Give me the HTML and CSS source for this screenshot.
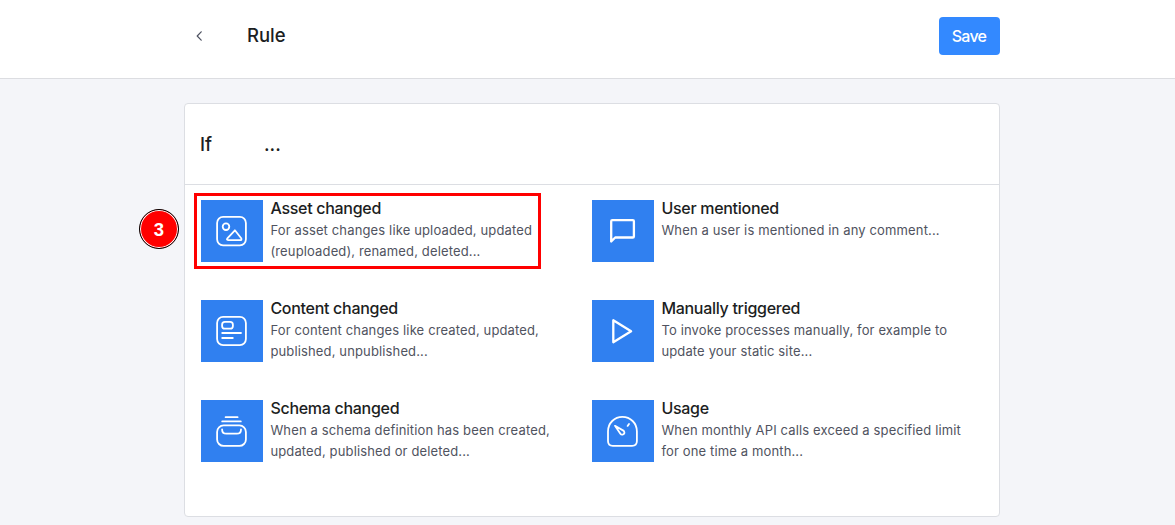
FILE: index.html
```html
<!DOCTYPE html>
<html lang="en">
<head>
<meta charset="utf-8">
<title>Rule</title>
<link rel="stylesheet" href="styles.css">
</head>
<body>
<header class="topbar">
  <div class="topbar-inner">
    <svg class="back" width="8" height="12" viewBox="0 0 8 12"><path d="M6.2 1.8 L2.2 6 L6.2 10.2"/></svg>
    <h1 class="title"><span>Rule</span></h1>
    <button class="save"><span>Save</span></button>
  </div>
</header>
<main class="card">
  <div class="card-head"><span class="if">If</span><span class="dots">...</span></div>
  <div class="triggers">
    <section class="trigger">
      <svg class="tile" viewBox="0 0 62 62"><rect x="16.1" y="16.9" width="28.8" height="28.4" rx="6"/><circle cx="25" cy="26.7" r="3.3"/><path d="M33.9 30.3 L40.2 38.2 Q41.2 40.2 39 40.2 H27.2 Q25 40 26.6 38.2 Z"/></svg>
      <div class="copy"><h2><span>Asset changed</span></h2><p><span>For asset changes like uploaded, updated</span><br><span>(reuploaded), renamed, deleted...</span></p></div>
    </section>
    <section class="trigger">
      <svg class="tile" viewBox="0 0 62 62"><path class="bold" d="M19.2 41.5 V21.3 Q19.2 20.2 20.3 20.2 H40.8 Q41.9 20.2 41.9 21.3 V36.4 Q41.9 37.5 40.8 37.5 H23.2 Z"/></svg>
      <div class="copy"><h2><span>User mentioned</span></h2><p><span>When a user is mentioned in any comment...</span></p></div>
    </section>
    <section class="trigger">
      <svg class="tile" viewBox="0 0 62 62"><rect x="16.1" y="16.9" width="28.8" height="28.2" rx="6"/><rect x="21.1" y="21.9" width="10.8" height="6.8" rx="2.8"/><path d="M21.2 33 H40 M21.2 38 H31.8"/></svg>
      <div class="copy"><h2><span>Content changed</span></h2><p><span>For content changes like created, updated,</span><br><span>published, unpublished...</span></p></div>
    </section>
    <section class="trigger">
      <svg class="tile" viewBox="0 0 62 62"><path class="bold" d="M21.3 20.3 V42.3 L39.1 31.3 Z"/></svg>
      <div class="copy"><h2><span>Manually triggered</span></h2><p><span>To invoke processes manually, for example to</span><br><span>update your static site...</span></p></div>
    </section>
    <section class="trigger">
      <svg class="tile" viewBox="0 0 62 62"><path d="M24.6 17.2 H36.6 M21.2 21.4 H39.8"/><rect x="16.1" y="25.4" width="28.8" height="20.5" rx="6.5"/><path d="M21.1 29.4 Q21.1 33.7 25.4 33.7 H35.8 Q40 33.7 40 29.4"/></svg>
      <div class="copy"><h2><span>Schema changed</span></h2><p><span>When a schema definition has been created,</span><br><span>updated, published or deleted...</span></p></div>
    </section>
    <section class="trigger">
      <svg class="tile" viewBox="0 0 62 62"><path d="M16 31.5 C16 23 22.5 16.9 30.4 16.9 S44.9 23 44.9 31.5 V41 Q44.9 45.8 40.1 45.8 H20.8 Q16 45.8 16 41 Z"/><path d="M23 25.8 L31.8 30.9 Q33.4 33.4 31 34.5 Q29.3 35 28.4 33.7 Z M35.6 25.9 L37 23.9"/></svg>
      <div class="copy"><h2><span>Usage</span></h2><p><span>When monthly API calls exceed a specified limit</span><br><span>for one time a month...</span></p></div>
    </section>
  </div>
</main>
<div class="highlight"></div>
<div class="step">3</div>
</body>
</html>
```
FILE: styles.css
```css
* { box-sizing: border-box; }
body {
  margin: 0;
  height: 525px;
  overflow: hidden;
  position: relative;
  background: #f4f5f9;
  color: #1c1e22;
  font-family: Inter, "Liberation Sans", sans-serif;
}
h1, h2, p { margin: 0; font-weight: 500; }
svg { fill: none; stroke: #fff; stroke-width: 1.8; stroke-linecap: round; stroke-linejoin: round; }
.bold { stroke-width: 2.3; }

.topbar { height: 79px; background: #fff; border-bottom: 1px solid #dcdde1; }
.topbar-inner {
  width: 816px;
  margin-left: 184px;
  padding: 17px 0 0 11px;
  display: flex;
}
.back { margin-top: 13px; stroke: #4d5160; stroke-width: 1.2; }
.title { margin-left: 44px; font-size: 18.5px; line-height: 37px; }
.save {
  width: 61px;
  height: 38px;
  margin-left: auto;
  padding: 0 1px 0 0;
  border: 0;
  border-radius: 4px;
  background: #3389ff;
  color: #fff;
  font: 500 16px/38px Inter, "Liberation Sans", sans-serif;
  letter-spacing: -0.7px;
}

.card {
  width: 816px;
  height: 414px;
  margin: 24px 0 0 184px;
  background: #fff;
  border: 1px solid #dcdee3;
  border-radius: 4px;
}
.card-head {
  height: 81px;
  padding-left: 15px;
  display: flex;
  border-bottom: 1px solid #dcdee3;
  font-size: 18.5px;
  font-weight: 500;
  line-height: 81px;
}
.if { width: 64px; }
.triggers {
  display: grid;
  grid-template-columns: 391px 391px;
  grid-auto-rows: 100px;
  padding: 15px 0 0 16px;
}
.trigger { display: flex; gap: 7.4px; }
.tile { width: 62px; height: 62px; flex: none; background: #3080f0; }
.copy { white-space: nowrap; }
.copy h2 { height: 20px; font-size: 16px; line-height: 17px; letter-spacing: -0.29px; }
.copy p { font-size: 13px; font-weight: 400; line-height: 21px; letter-spacing: 0.14px; color: #505360; }

.highlight {
  position: absolute;
  left: 194px;
  top: 193px;
  width: 347px;
  height: 76px;
  border: 3px solid #f00;
}
.step {
  position: absolute;
  left: 139px;
  top: 209px;
  width: 40px;
  height: 40px;
  border: 1px solid #000;
  border-radius: 50%;
  background: #f00;
  box-shadow: inset 0 0 0 1px #fff;
  color: #fff;
  font: 700 18.5px/40px "Liberation Sans", sans-serif;
  text-align: center;
}
```
